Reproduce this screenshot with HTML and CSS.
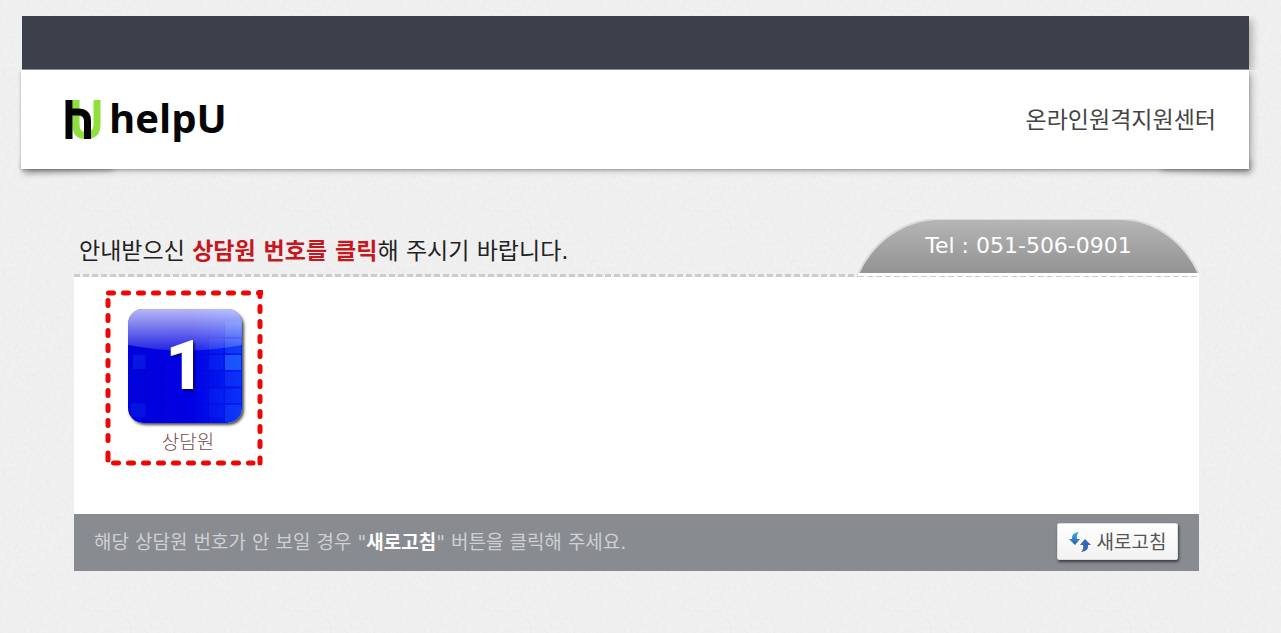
FILE: index.html
```html
<!DOCTYPE html>
<html lang="ko">
<head>
<meta charset="utf-8">
<meta name="viewport" content="width=device-width, initial-scale=1">
<title>helpU 온라인원격지원센터</title>
<link rel="stylesheet" href="styles.css">
</head>
<body>
<header class="site-header">
  <div class="top-bar"></div>
  <div class="brand-row">
    <a class="brand" href="#">
      <svg class="brand-mark" viewBox="0 0 36 39" aria-hidden="true">
        <path d="M11 0V25Q11 35.500 20.500 35.500Q32 35.500 32 25V0" fill="none" stroke="#8fe03c" stroke-width="7"/>
        <path d="M4 0V39M4 12H13Q22.500 12 22.500 21V39" fill="none" stroke="#050505" stroke-width="7"/>
      </svg>
      <span class="brand-name">helpU</span>
    </a>
    <p class="center-name">온라인원격지원센터</p>
  </div>
</header>
<main class="content">
  <div class="heading-row">
    <h1 class="guide">안내받으신 <strong>상담원 번호를 클릭</strong>해 주시기 바랍니다.</h1>
    <div class="tel-tab">
      <svg class="tel-shape" viewBox="0 0 341 56" preserveAspectRatio="none" aria-hidden="true">
        <defs><linearGradient id="tel-fill" x1="0" y1="0" x2="0" y2="1"><stop offset="0" stop-color="#b6b6b6"/><stop offset="1" stop-color="#929292"/></linearGradient></defs>
        <path d="M0 55C15 22 46 0 82 0H261C296 0 326 22 341 55Z" fill="url(#tel-fill)"/>
        <path d="M0 55C15 22 46 0 82 0H261C296 0 326 22 341 55" fill="none" stroke="#dcdcdc" stroke-width="2"/>
        <path d="M0 55H341" stroke="#fff" stroke-width="2"/>
      </svg>
      <span class="tel-text">Tel : 051-506-0901</span>
    </div>
  </div>
  <section class="panel">
    <a class="agent" href="#">
      <svg class="agent-frame" viewBox="0 0 158 176" aria-hidden="true">
        <g fill="none" stroke="#ee0505" stroke-width="5" stroke-linecap="round" stroke-dasharray="5 10">
          <path d="M3.500 3H156"/>
          <path d="M155 1.500V166"/>
          <path d="M3 10.500V160"/>
          <path d="M8.500 173H148"/>
          <path d="M3 163V170" stroke-dasharray="none"/>
          <path d="M155 168V173" stroke-dasharray="none"/>
        </g>
        <rect x="153" y="0" width="5" height="5" fill="#ee0505"/>
      </svg>
      <span class="agent-tile">
        <svg class="tile-art" viewBox="0 0 114 114" aria-hidden="true">
          <defs>
            <linearGradient id="tile-base" x1="0" y1="0" x2="1" y2="0"><stop offset="0" stop-color="#0202dc"/><stop offset=".55" stop-color="#0000e4"/><stop offset="1" stop-color="#0525f8"/></linearGradient>
            <linearGradient id="tile-shine" x1="0" y1="0" x2="0" y2="1"><stop offset="0" stop-color="#fff" stop-opacity=".72"/><stop offset="1" stop-color="#fff" stop-opacity=".14"/></linearGradient>
          </defs>
          <rect width="114" height="114" fill="url(#tile-base)"/>
          <g fill="#2d8cff">
            <rect x="97" y="13" width="16" height="15" opacity=".2"/><rect x="97" y="30" width="16" height="14" opacity=".25"/>
            <rect x="97" y="46" width="16" height="15" opacity=".5"/><rect x="97" y="63" width="16" height="14" opacity=".15"/>
            <rect x="97" y="80" width="16" height="14" opacity=".12"/><rect x="97" y="96" width="16" height="17" opacity=".2"/>
            <rect x="81" y="30" width="14" height="14" opacity=".08"/><rect x="81" y="46" width="14" height="15" opacity=".1"/>
            <rect x="81" y="80" width="14" height="14" opacity=".08"/><rect x="81" y="96" width="14" height="12" opacity=".06"/>
            <rect x="5" y="46" width="13" height="14" opacity=".15"/><rect x="3" y="94" width="15" height="14" opacity=".12"/>
          </g>
          <path d="M17.500 40V114M34.500 40V114M50.500 40V114M65.500 12V114M80.500 12V114M96.500 12V114M0 61.500H114M0 78.500H114M0 94.500H114M60 28.500H114M60 45.500H114" stroke="#0000aa" stroke-opacity=".25"/>
          <path d="M0 0H114V36Q57 47 0 36Z" fill="url(#tile-shine)"/>
        </svg>
        <span class="tile-number">1</span>
      </span>
      <span class="agent-label">상담원</span>
    </a>
  </section>
  <footer class="notice">
    <p class="notice-text">해당 상담원 번호가 안 보일 경우 "<strong>새로고침</strong>" 버튼을 클릭해 주세요.</p>
    <button class="refresh" type="button">
      <svg class="refresh-icon" viewBox="0 0 22 20" aria-hidden="true">
        <defs><linearGradient id="arrow" x1="0" y1="0" x2="0" y2="1"><stop offset="0" stop-color="#35b0dc"/><stop offset="1" stop-color="#2e5cab"/></linearGradient></defs>
        <path d="M10 0Q2 1 3 7H0L6 13L11 7H8Q7 3 10 0Z" fill="url(#arrow)"/>
        <path d="M12 20Q20 19 19 13H22L16 7L11 13H14Q15 17 12 20Z" fill="#3767b5"/>
      </svg>
      <span>새로고침</span>
    </button>
  </footer>
</main>
</body>
</html>
```

FILE: styles.css
```css
* { box-sizing: border-box; }

body {
  margin: 0;
  min-height: 100vh;
  padding: 16px 0 62px;
  background-color: #f1f1f1;
  background-image: url("data:image/svg+xml,%3Csvg xmlns='http://www.w3.org/2000/svg' width='200' height='200'%3E%3Cfilter id='n'%3E%3CfeTurbulence type='fractalNoise' baseFrequency='.3' numOctaves='2' stitchTiles='stitch'/%3E%3CfeColorMatrix values='0 0 0 0 .5 0 0 0 0 .5 0 0 0 0 .5 .18 0 0 0 -.06'/%3E%3C/filter%3E%3Crect width='200' height='200' filter='url(%23n)'/%3E%3C/svg%3E");
  color: #222;
  font-family: "DejaVu Sans", "Noto Sans CJK KR", sans-serif;
}

p, h1 { margin: 0; }
a { color: inherit; text-decoration: none; }

.site-header {
  position: relative;
  isolation: isolate;
  margin: 0 32px 0 21px;
}

.top-bar {
  height: 54px;
  margin-left: 1px;
  background: #3b404a;
  border-bottom: 1px solid #8c9099;
  box-shadow: 5px 2px 8px -2px rgba(0, 0, 0, .3);
  clip-path: inset(0 -16px 0 0);
}

.brand-row {
  display: flex;
  align-items: center;
  justify-content: space-between;
  min-height: 99px;
  padding: 0 33px 0 44px;
  background: #fff;
  box-shadow: 0 1px 3px rgba(0, 0, 0, .25), 4px 2px 8px -2px rgba(0, 0, 0, .3);
}

.site-header::before,
.site-header::after {
  content: "";
  position: absolute;
  z-index: -1;
  bottom: -3px;
  width: 90px;
  height: 12px;
  background: rgba(0, 0, 0, .3);
  filter: blur(3px);
}

.site-header::before { left: 2px; transform: rotate(-2deg); }
.site-header::after { right: -2px; transform: rotate(2deg); }

.brand {
  display: flex;
  align-items: flex-start;
  gap: 8px;
  padding-bottom: 4px;
  color: #050505;
}

.brand-mark { width: 36px; height: 39px; margin-top: 8px; }

.brand-name {
  font: 700 40px/52px "Open Sans", sans-serif;
}

.center-name {
  color: #444;
  font-size: 23px;
  line-height: 32px;
}

.content { margin: 50px 82px 0 74px; }

.heading-row {
  display: flex;
  min-height: 58px;
  background: repeating-linear-gradient(90deg, #ccc 0 6px, transparent 6px 9px) bottom / 100% 3px no-repeat;
}

.guide {
  flex: 1;
  padding: 16px 0 10px 5px;
  font-size: 23px;
  font-weight: 400;
  line-height: 32px;
}

.guide strong { color: #c8161d; font-weight: 700; }

.tel-tab {
  position: relative;
  width: 341px;
  padding: 11px 0 15px;
  text-align: center;
  background:
    repeating-linear-gradient(90deg, #ccc 0 6px, #fff 6px 9px) bottom / 100% 1px no-repeat,
    linear-gradient(#fff, #fff) bottom / 100% 3px no-repeat;
}

.tel-shape {
  position: absolute;
  inset: 0 0 auto;
  width: 100%;
  height: 56px;
}

.tel-text {
  position: relative;
  color: #fff;
  font: 22px/32px "DejaVu Sans", sans-serif;
}

.panel {
  min-height: 237px;
  padding: 13px 31px;
  background: #fff;
}

.agent {
  position: relative;
  display: inline-flex;
  flex-direction: column;
  align-items: center;
  gap: 5px;
  width: 158px;
  height: 176px;
  padding: 19px 0 0 2px;
}

.agent-frame {
  position: absolute;
  inset: 0;
  width: 100%;
  height: 100%;
}

.agent-tile {
  display: grid;
  width: 114px;
  height: 114px;
  border-radius: 15px;
  box-shadow: 2px 2px 3px rgba(0, 0, 0, .7);
}

.tile-art, .tile-number { grid-area: 1 / 1; }
.tile-art { width: 114px; height: 114px; border-radius: 15px; }

.tile-number {
  place-self: center;
  color: #fff;
  font: 900 68px/80px Roboto, sans-serif;
  text-shadow: 2px 2px 2px rgba(0, 0, 60, .6);
}

.agent-label {
  padding-left: 6px;
  color: #744c4c;
  font-size: 19px;
  font-weight: 300;
  line-height: 28px;
}

.notice {
  display: flex;
  align-items: center;
  justify-content: space-between;
  min-height: 57px;
  padding: 0 21px 2px 20px;
  background: #888b90;
}

.notice-text {
  color: #ced0d4;
  font-size: 19px;
  line-height: 28px;
}

.notice-text strong { color: #fff; }

.refresh {
  display: flex;
  align-items: center;
  justify-content: center;
  gap: 6px;
  width: 121px;
  height: 37px;
  padding: 0;
  border: 1px solid #ddd;
  border-radius: 2px;
  background: linear-gradient(#fff, #f2f2f2);
  box-shadow: 1px 2px 3px rgba(0, 0, 0, .55);
  color: #555;
  font: 19px/28px "DejaVu Sans", "Noto Sans CJK KR", sans-serif;
}

.refresh-icon { width: 22px; height: 20px; }
```
